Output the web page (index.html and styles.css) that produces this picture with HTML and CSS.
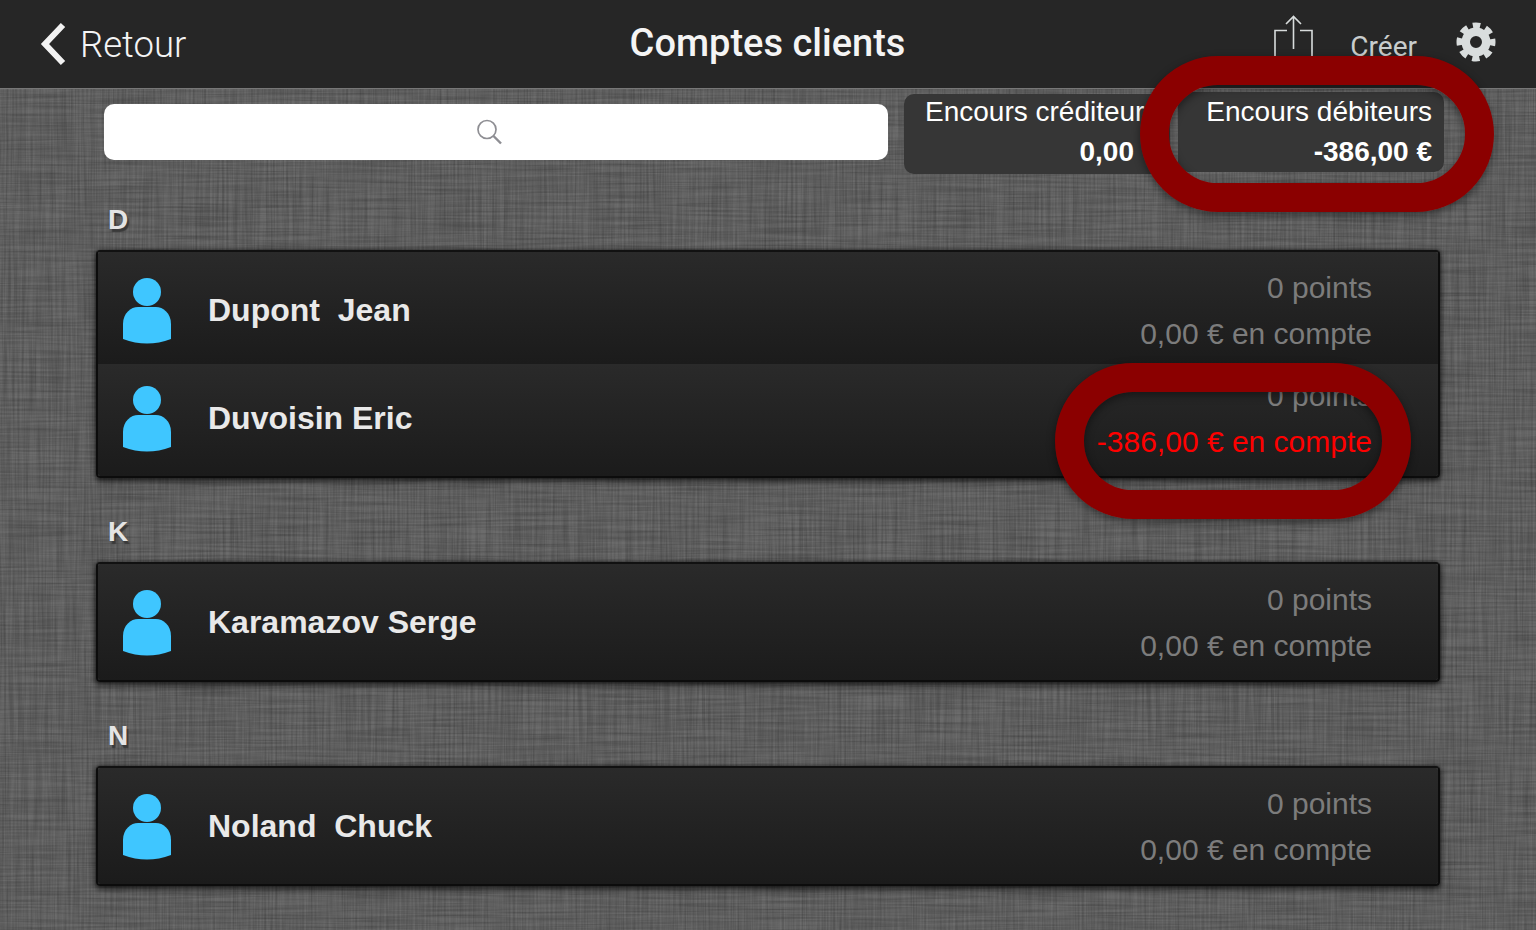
FILE: index.html
```html
<!DOCTYPE html>
<html lang="fr">
<head>
<meta charset="utf-8">
<title>Comptes clients</title>
<link rel="stylesheet" href="styles.css">
</head>
<body>
<header class="topbar">
  <div class="back">
    <svg class="chevron" width="28" height="44" viewBox="0 0 28 44"><path d="M23 3 L5 22 L23 41" fill="none" stroke="#f2f2f2" stroke-width="6"/></svg>
    <span>Retour</span>
  </div>
  <h1 class="title">Comptes clients</h1>
  <div class="actions">
    <svg class="share" width="40" height="46" viewBox="0 0 40 46"><path d="M13 15.5H1V44M26 15.5H38V44M19.5 34V1.5M12 9L19.5 1.5L27 9" fill="none" stroke="#d8dcdc" stroke-width="1.6"/></svg>
    <span class="create">Créer</span>
    <svg class="gear" width="42" height="42" viewBox="0 0 42 42"><circle cx="21" cy="21" r="10.25" fill="none" stroke="#d9dddd" stroke-width="8.5"/><circle cx="21" cy="21" r="16.5" fill="none" stroke="#d9dddd" stroke-width="6" stroke-dasharray="7.4 5.56" stroke-dashoffset="3.7"/></svg>
  </div>
</header>
<main class="content">
  <div class="toolbar">
    <div class="search">
      <svg class="search-icon" width="28" height="28" viewBox="0 0 28 28"><circle cx="12" cy="11.5" r="9" fill="none" stroke="#8e8e93" stroke-width="1.7"/><path d="M18.5 18L26 25.5" stroke="#8e8e93" stroke-width="2.4"/></svg>
    </div>
    <div class="stat stat-credit">
      <div class="stat-label">Encours créditeur</div>
      <div class="stat-value">0,00</div>
    </div>
    <div class="stat stat-debit">
      <div class="stat-label">Encours débiteurs</div>
      <div class="stat-value">-386,00 €</div>
    </div>
  </div>

  <h2 class="letter letter-d">D</h2>
  <section class="card">
    <div class="row row-top">
      <svg class="person" width="48" height="66" viewBox="0 0 48 66"><circle cx="24" cy="14" r="14"/><path d="M0 61V46C0 35 8 29 15 29H33C40 29 48 35 48 46V61C32 67 16 67 0 61Z"/></svg>
      <div class="name">Dupont&nbsp; Jean</div>
      <div class="balance"><div>0 points</div><div>0,00 € en compte</div></div>
    </div>
    <div class="row row-second">
      <svg class="person" width="48" height="66" viewBox="0 0 48 66"><circle cx="24" cy="14" r="14"/><path d="M0 61V46C0 35 8 29 15 29H33C40 29 48 35 48 46V61C32 67 16 67 0 61Z"/></svg>
      <div class="name">Duvoisin Eric</div>
      <div class="balance"><div>0 points</div><div class="negative">-386,00 € en compte</div></div>
    </div>
  </section>

  <h2 class="letter">K</h2>
  <section class="card">
    <div class="row row-single">
      <svg class="person" width="48" height="66" viewBox="0 0 48 66"><circle cx="24" cy="14" r="14"/><path d="M0 61V46C0 35 8 29 15 29H33C40 29 48 35 48 46V61C32 67 16 67 0 61Z"/></svg>
      <div class="name">Karamazov Serge</div>
      <div class="balance"><div>0 points</div><div>0,00 € en compte</div></div>
    </div>
  </section>

  <h2 class="letter">N</h2>
  <section class="card">
    <div class="row row-single">
      <svg class="person" width="48" height="66" viewBox="0 0 48 66"><circle cx="24" cy="14" r="14"/><path d="M0 61V46C0 35 8 29 15 29H33C40 29 48 35 48 46V61C32 67 16 67 0 61Z"/></svg>
      <div class="name">Noland&nbsp; Chuck</div>
      <div class="balance"><div>0 points</div><div>0,00 € en compte</div></div>
    </div>
  </section>
</main>
<div class="oval oval-stat"></div>
<div class="oval oval-row"></div>
</body>
</html>
```
FILE: styles.css
```css
* { box-sizing: border-box; }
html, body { height: 100%; }
body {
  margin: 0;
  height: 930px;
  overflow: hidden;
  position: relative;
  font-family: "Liberation Sans", Arial, sans-serif;
  background-color: #6c6c6c;
  background-image:
    url("data:image/svg+xml,%3Csvg xmlns='http://www.w3.org/2000/svg' width='1536' height='930'%3E%3Cfilter id='a' x='0' y='0' width='100%25' height='100%25'%3E%3CfeTurbulence type='fractalNoise' baseFrequency='0.45 0.012' numOctaves='3' seed='4'/%3E%3CfeGaussianBlur stdDeviation='0.6'/%3E%3CfeColorMatrix values='0 0 0 0 0 0 0 0 0 0 0 0 0 0 0 0.34 0 0 0 -0.1'/%3E%3C/filter%3E%3Cfilter id='b' x='0' y='0' width='100%25' height='100%25'%3E%3CfeTurbulence type='fractalNoise' baseFrequency='0.012 0.45' numOctaves='3' seed='9'/%3E%3CfeGaussianBlur stdDeviation='0.6'/%3E%3CfeColorMatrix values='0 0 0 0 0 0 0 0 0 0 0 0 0 0 0 0.34 0 0 0 -0.1'/%3E%3C/filter%3E%3Crect width='1536' height='930' filter='url(%23a)'/%3E%3Crect width='1536' height='930' filter='url(%23b)'/%3E%3C/svg%3E");
}

.topbar {
  height: 88px;
  background: #262626;
  display: grid;
  grid-template-columns: 1fr auto 1fr;
  align-items: center;
  color: #fff;
  box-shadow: 0 1px 0 #777;
}
.back {
  display: flex;
  align-items: center;
  gap: 12px;
  padding-left: 40px;
  font-family: Roboto, sans-serif;
  font-weight: 300;
  font-size: 36.5px;
  color: #f4f4f4;
}
.title {
  margin: -2px 1px 0 0;
  font-family: Roboto, sans-serif;
  font-weight: 500;
  font-size: 38px;
  color: #f4f4f4;
}
.actions {
  display: flex;
  align-items: center;
  justify-content: flex-end;
  padding-right: 39px;
  height: 88px;
}
.share { margin: 0 36px 0 0; position: relative; top: -6px; }
.create {
  font-family: Roboto, sans-serif;
  font-size: 28px;
  color: #c9cdcd;
  margin: 4px 38px 0 0;
}
.gear { position: relative; top: -2px; }

.content { padding: 4px 96px 0; }
.toolbar {
  height: 82px;
  display: flex;
  padding: 0 0 0 8px;
}
.search {
  flex: none;
  width: 784px;
  height: 56px;
  margin: 12px 16px 0 0;
  background: #fff;
  border-radius: 10px;
  display: flex;
  align-items: center;
  justify-content: center;
}
.search-icon { margin-right: 15px; }
.stat {
  flex: none;
  width: 266px;
  height: 80px;
  background: #363636;
  border-radius: 10px;
  color: #fff;
  font-size: 28px;
  line-height: 40px;
  text-align: right;
}
.stat-credit { padding: 0 36px 0 21px; margin: 2px 8px 0 0; white-space: nowrap; }
.stat-debit { padding: 0 12px 0 0; }
.stat-credit .stat-label { text-align: left; margin-top: -2px; }
.stat-value { font-weight: 700; }

.letter {
  margin: 40px 0 0;
  height: 28px;
  padding-left: 12px;
  font-size: 28px;
  line-height: 28px;
  font-weight: 700;
  color: #e4e4e4;
  text-shadow: 2px 3px 1px #3a3a3a;
}
.letter-d { margin-top: 32px; }

.card {
  margin-top: 16px;
  border: 2px solid #0c0c0c;
  border-top-color: #111;
  border-radius: 4px;
  box-shadow: 0 4px 6px rgba(0, 0, 0, .5), -1px 0 4px rgba(0, 0, 0, .35), 1px 0 4px rgba(0, 0, 0, .35);
  overflow: hidden;
}
.row {
  display: flex;
  align-items: center;
  padding: 0 66px 0 25px;
  background: linear-gradient(#2a2a2a, #1b1b1b);
}
.row-top { height: 112px; padding-top: 6px; }
.row-second { height: 112px; padding-bottom: 2px; }
.row-single { height: 116px; padding-top: 2px; }
.person { fill: #3fc6ff; flex: none; margin-right: 37px; }
.name {
  font-weight: 700;
  font-size: 32px;
  color: #e9e9e9;
  flex: 1;
  margin-top: -2px;
}
.balance {
  text-align: right;
  font-size: 30px;
  line-height: 46px;
  color: #7c7c7c;
}
.negative { color: #fe0000; }

.oval {
  position: absolute;
  border: 29px solid #8b0000;
  border-radius: 78px;
  box-shadow: 0 3px 8px rgba(0, 0, 0, .45), inset 0 3px 8px rgba(0, 0, 0, .45);
}
.oval-stat { left: 1140px; top: 56px; width: 354px; height: 156px; }
.oval-row { left: 1055px; top: 363px; width: 356px; height: 156px; }
```
